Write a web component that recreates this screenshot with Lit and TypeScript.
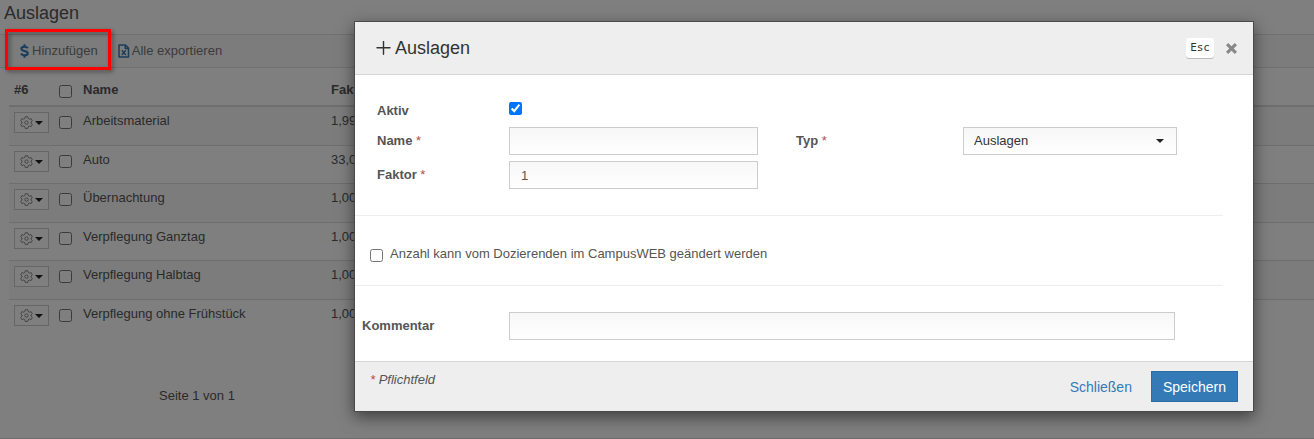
import { LitElement, html, css, svg } from "lit";
import { customElement } from "lit/decorators.js";

interface Expense {
  name: string;
  factor: string;
}

const EXPENSES: Expense[] = [
  { name: "Arbeitsmaterial", factor: "1,99" },
  { name: "Auto", factor: "33,00" },
  { name: "Übernachtung", factor: "1,00" },
  { name: "Verpflegung Ganztag", factor: "1,00" },
  { name: "Verpflegung Halbtag", factor: "1,00" },
  { name: "Verpflegung ohne Frühstück", factor: "1,00" },
];

const base = css`
  *, *::before, *::after { box-sizing: border-box; }
  button, input, select { font: inherit; margin: 0; }
  input[type="checkbox"] { display: block; width: 13px; height: 13px; margin: 0; }
  svg { display: block; flex: none; fill: none; stroke: currentColor; }
`;

const gear = svg`<path stroke-width="1" stroke-linejoin="round" d="M5.2 .8h2.6l.4 1.7 1.2.7 1.7-.6 1.2 2.2-1.3 1.2v1.200l1.300 1.200-1.200 2.200-1.700-.6-1.200.7-.4 1.700H5.200l-.4-1.700-1.200-.7-1.700.6L.7 8.400l1.300-1.200V6L.7 4.800l1.200-2.200 1.700.6 1.200-.7z"/><circle cx="6.500" cy="6.600" r="1.700" stroke-width="1"/>`;

@customElement("expense-list")
export class ExpenseList extends LitElement {
  static styles = [base, css`
    :host { display: block; color: #555; }
    .title { margin: 0; padding: 1px 4px 9px; font-size: 18px; line-height: 24px; font-weight: 400; }
    .toolbar { display: flex; align-items: center; height: 34px; padding-left: 19px; gap: 20px; background: #f9f9f9; border: solid #e0e0e0; border-width: 1px 0; }
    .tool { display: flex; align-items: center; gap: 2px; padding: 0; border: 0; background: none; color: #777; line-height: 20px; }
    .tool svg { color: #337ab7; }
    .table { width: calc(100% - 9px); margin-left: 9px; border-spacing: 0; table-layout: fixed; }
    .c-action { width: 50px; }
    .c-check { width: 19px; }
    .c-name { width: 248px; }
    th { height: 39px; padding: 7px 5px 0; border-bottom: 2px solid #ddd; text-align: left; vertical-align: top; line-height: 30px; }
    td { height: 38px; padding: 5px; border-top: 1px solid #ddd; text-align: left; vertical-align: top; line-height: 18px; }
    th.check { padding: 17px 0 0; }
    td.check { padding: 9px 0 0; }
    tbody tr:nth-child(odd) td { height: 39px; background: #f9f9f9; }
    tbody tr:first-child td { height: 38px; border-top: 0; }
    .menu { display: flex; align-items: center; justify-content: center; gap: 2px; width: 35px; height: 21px; padding: 0; border: 1px solid #ccc; background: #fff; color: #888; }
    .caret { border: solid transparent; border-width: 4px 4px 0; border-top-color: #222; }
    .pager { margin: 0; padding: 49px 0 0 159px; line-height: 20px; }
  `];

  render() {
    return html`
      <h1 class="title">Auslagen</h1>
      <div class="toolbar">
        <button class="tool" type="button">
          <svg width="11" height="14" viewBox="0 0 11 14"><path stroke-width="2.100" d="M8.800 4.300C8.200 3.200 7 2.700 5.500 2.700c-1.900 0-3.100.8-3.100 2 0 1.400 1.300 1.800 3.100 2.200 2 .5 3.300 1 3.300 2.400 0 1.300-1.300 2.100-3.200 2.100-1.600 0-2.900-.6-3.700-1.700M5.500.2v2.300M5.500 11.500v2.300"/></svg>
          Hinzufügen
        </button>
        <button class="tool" type="button">
          <svg width="12" height="14" viewBox="0 0 12 14"><path stroke-width="1.500" stroke-linejoin="round" d="M1 1h6.500l3 3V13H1zM7.300 1v3.400h3.200"/><path stroke-width="1.400" d="M3.800 6.300l4 4.700M7.800 6.300l-4 4.700"/></svg>
          Alle exportieren
        </button>
      </div>
      <table class="table">
        <colgroup><col class="c-action"><col class="c-check"><col class="c-name"><col></colgroup>
        <thead>
          <tr><th>#6</th><th class="check"><input type="checkbox" aria-label="Alle"></th><th>Name</th><th>Faktor</th></tr>
        </thead>
        <tbody>
          ${EXPENSES.map((e) => html`
            <tr>
              <td><button class="menu" type="button" aria-label="Aktionen"><svg width="13" height="13" viewBox="0 0 13 13">${gear}</svg><span class="caret"></span></button></td>
              <td class="check"><input type="checkbox" aria-label=${e.name}></td>
              <td>${e.name}</td>
              <td>${e.factor}</td>
            </tr>`)}
        </tbody>
      </table>
      <p class="pager">Seite 1 von 1</p>
    `;
  }
}

@customElement("expense-dialog")
export class ExpenseDialog extends LitElement {
  static styles = [base, css`
    :host { display: block; color: #555; }
    .dialog { background: #fff; border: 1px solid #4a4a4a; box-shadow: 0 5px 15px rgba(0, 0, 0, 0.5); }
    .head { display: flex; align-items: center; height: 53px; padding: 0 14px 0 21px; gap: 10px; background: #eee; border-bottom: 1px solid #d5d5d5; color: #333; }
    .heading { display: flex; flex: 1; align-items: center; gap: 4px; margin: 0; font-size: 18px; font-weight: 400; }
    .key { padding: 0 4px; background: #fff; border-radius: 3px; box-shadow: 0 1px 0 #bbb; font: 11px/20px "DejaVu Sans Mono", monospace; }
    .close { display: flex; padding: 2px; border: 0; background: none; color: #888; }
    .fields { display: grid; grid-template-columns: 132px 249fr 205px 214fr; grid-template-rows: 20px 28px 28px; row-gap: 6px; padding: 26px 76px 26px 22px; }
    .fields label { align-self: center; font-weight: 700; }
    .fields .second { padding-left: 38px; }
    .active { align-self: center; }
    .active input { margin-bottom: 6px; }
    .left { grid-column: 1; }
    .req { color: #b94a48; font-weight: 400; }
    .text, .select { width: 100%; height: 28px; padding: 0 11px; border: 1px solid #ccc; border-radius: 0; background: linear-gradient(#f7f7f7, #fff); color: #555; }
    .selectbox { display: grid; align-items: center; }
    .selectbox > * { grid-area: 1 / 1; }
    .select { appearance: none; padding: 0 10px; color: #333; }
    .caret { justify-self: end; margin-right: 13px; border: solid transparent; border-width: 4px 4px 0; border-top-color: #222; pointer-events: none; }
    .rule { margin: 0 30px 0 0; border: 0; border-top: 1px solid #eee; }
    .option { display: flex; align-items: center; gap: 7px; padding: 29px 15px 21px; }
    .option label { padding-bottom: 2px; line-height: 17px; }
    .option input { margin-top: 2px; }
    .comment { display: grid; grid-template-columns: 147px 1fr; align-items: center; padding: 26px 78px 21px 7px; }
    .comment label { font-weight: 700; }
    .foot { display: flex; padding: 9px 15px; background: #eee; border-top: 1px solid #d5d5d5; font-size: 14px; }
    .note { flex: 1; margin: 0; font-size: 13px; line-height: 18px; font-style: italic; }
    .btn { height: 31px; padding: 0 11px; border: 1px solid transparent; background: none; color: #337ab7; }
    .primary { margin-left: 7px; background: #337ab7; border-color: #2e6da4; color: #fff; }
  `];

  render() {
    return html`
      <form class="dialog" role="dialog" aria-labelledby="heading">
        <header class="head">
          <h2 class="heading" id="heading">
            <svg width="15" height="15" viewBox="0 0 15 15"><path stroke-width="1.400" stroke-linecap="round" d="M7.500 .3v13M1 6.800h13"/></svg>
            Auslagen
          </h2>
          <kbd class="key">Esc</kbd>
          <button class="close" type="button" aria-label="Schließen"><svg width="11" height="11" viewBox="0 0 10 10"><path stroke-width="2.800" d="M1 1l8 8M9 1L1 9"/></svg></button>
        </header>
        <div class="fields">
          <label for="active">Aktiv</label>
          <div class="active"><input id="active" type="checkbox" checked></div>
          <label class="left" for="name">Name <span class="req">*</span></label>
          <input class="text" id="name" type="text">
          <label class="second" for="type">Typ <span class="req">*</span></label>
          <div class="selectbox">
            <select class="select" id="type"><option>Auslagen</option></select>
            <span class="caret"></span>
          </div>
          <label class="left" for="factor">Faktor <span class="req">*</span></label>
          <input class="text" id="factor" type="text" value="1">
        </div>
        <hr class="rule">
        <div class="option">
          <input id="editable" type="checkbox">
          <label for="editable">Anzahl kann vom Dozierenden im CampusWEB geändert werden</label>
        </div>
        <hr class="rule">
        <div class="comment">
          <label for="comment">Kommentar</label>
          <input class="text" id="comment" type="text">
        </div>
        <footer class="foot">
          <p class="note"><span class="req">*</span> Pflichtfeld</p>
          <button class="btn" type="button">Schließen</button>
          <button class="btn primary" type="submit">Speichern</button>
        </footer>
      </form>
    `;
  }
}

@customElement("app-root")
export class AppRoot extends LitElement {
  static styles = css`
    :host { display: block; position: relative; box-sizing: border-box; min-height: 100vh; background: #fff; border-bottom: 1px solid #ddd; font: 13px/20px "Liberation Sans", Arial, sans-serif; }
    .backdrop { position: absolute; inset: 0 0 -1px; padding: 21px 60px 27px 354px; background: rgba(0, 0, 0, 0.5); }
    .marker { position: absolute; top: 29px; left: 5px; box-sizing: border-box; width: 106px; height: 41px; border: 3px solid #f00; filter: drop-shadow(2px 2px 2px rgba(0, 0, 0, 0.4)); pointer-events: none; }
  `;

  render() {
    return html`
      <expense-list></expense-list>
      <div class="backdrop"><expense-dialog></expense-dialog></div>
      <div class="marker"></div>
    `;
  }
}
